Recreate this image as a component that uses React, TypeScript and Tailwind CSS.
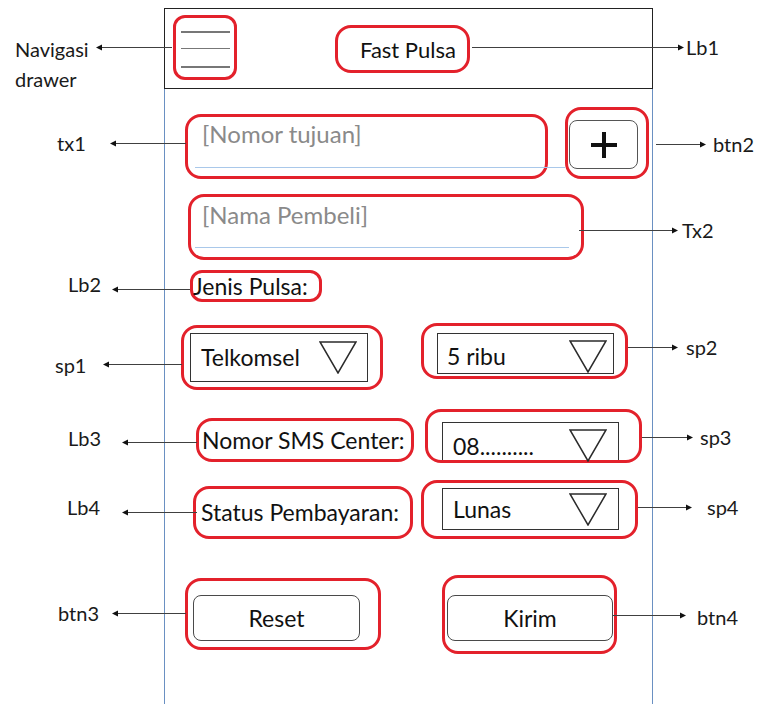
import React from "react";

function Arrow({
  className,
  width,
  dir,
}: {
  className: string;
  width: number;
  dir: "left" | "right";
}) {
  return (
    <svg
      className={`absolute ${className}`}
      width={width}
      height="9"
      viewBox={`0 0 ${width} 9`}
    >
      <line
        x1={dir === "left" ? 5 : 0}
        y1="4.5"
        x2={dir === "left" ? width : width - 5}
        y2="4.5"
        stroke="#404040"
        strokeWidth="1"
      />
      {dir === "left" ? (
        <polygon points="0,4.5 6,1.5 6,7.5" fill="#111" />
      ) : (
        <polygon
          points={`${width},4.5 ${width - 6},1.5 ${width - 6},7.5`}
          fill="#111"
        />
      )}
    </svg>
  );
}

function Note({ className, children }: { className: string; children: React.ReactNode }) {
  return (
    <span className={`absolute text-[20px] leading-[24px] text-[#1a1a1a] ${className}`}>
      {children}
    </span>
  );
}

function Caret() {
  return (
    <svg width="38" height="33" viewBox="0 0 38 33" className="shrink-0">
      <polygon points="1,1 37,1 19,32" fill="none" stroke="#2b2b2b" strokeWidth="1.5" />
    </svg>
  );
}

function ButtonBox({ label }: { label: string }) {
  return (
    <div className="flex h-full w-full items-center justify-center rounded-lg border-[1.5px] border-[#4a4a4a] text-[23px] text-[#111]">
      {label}
    </div>
  );
}

export default function App() {
  return (
    <div
      className="relative h-[704px] w-[757px] overflow-hidden bg-white"
      style={{ fontFamily: "Lato, 'Open Sans', sans-serif" }}
    >
      {/* phone frame */}
      <div className="ml-[164px] mt-[8px] flex h-[696px] w-[489px] flex-col">
        <header className="flex h-[81px] shrink-0 items-start border border-[#222]">
          <div className="ml-[8px] mt-[6px] flex h-[65px] w-[64px] flex-col rounded-xl border-[3px] border-[#e3212b] pt-[13px]">
            <div className="ml-[5px] h-[1.5px] w-[49px] bg-[#777]" />
            <div className="ml-[5px] mt-[15px] h-[1.5px] w-[49px] bg-[#777]" />
            <div className="ml-[5px] mt-[17px] h-[1.5px] w-[49px] bg-[#777]" />
          </div>
          <div className="ml-[98px] mt-[16px] flex h-[48px] w-[135px] items-center rounded-2xl border-[3px] border-[#e3212b] pl-[22px] text-[22px] text-[#111]">
            Fast Pulsa
          </div>
        </header>

        <main className="flex flex-1 flex-col border-x border-[#6a90c2] text-[23px] text-[#111]">
          {/* tx1 + btn2 */}
          <div className="mt-[18px] flex items-start">
            <div className="ml-[20px] mt-[7px] h-[65px] w-[363px] rounded-2xl border-[3px] border-[#e3212b]">
              <div className="pl-[14px] pt-[3px] text-[24px] leading-[28px] text-[#8a8a8a]">[Nomor tujuan]</div>
              <div className="ml-[7px] mt-[19px] h-px w-[370px] bg-[#a9c8ea]" />
            </div>
            <div className="ml-[17px] h-[72px] w-[84px] rounded-2xl border-[3px] border-[#e3212b] pl-[1px] pt-[10px]">
              <div className="flex h-[49px] w-[69px] items-center justify-center rounded-lg border-[1.5px] border-[#555]">
                <svg width="30" height="30" viewBox="0 0 30 30">
                  <path d="M15 2v26M2 15h26" stroke="#111" strokeWidth="4" />
                </svg>
              </div>
            </div>
          </div>

          {/* Tx2 */}
          <div className="ml-[23px] mt-[15px] h-[66px] w-[396px] rounded-2xl border-[3px] border-[#e3212b]">
            <div className="pl-[11px] pt-[4px] text-[24px] leading-[28px] text-[#8a8a8a]">[Nama Pembeli]</div>
            <div className="ml-[4px] mt-[18px] h-px w-[374px] bg-[#a9c8ea]" />
          </div>

          {/* Lb2 */}
          <div className="ml-[25px] mt-[10px] flex h-[32px] w-[132px] items-center rounded-xl border-[3px] border-[#e3212b] leading-none">
            Jenis Pulsa:
          </div>

          {/* sp1 + sp2 */}
          <div className="mt-[21px] flex items-start">
            <div className="ml-[16px] mt-[2px] h-[65px] w-[202px] rounded-2xl border-[3px] border-[#e3212b] pl-[6px] pt-[5px]">
              <div className="flex h-[49px] w-[178px] items-center justify-between border-[1.5px] border-[#333] pl-[10px] pr-[10px]">
                <span>Telkomsel</span>
                <Caret />
              </div>
            </div>
            <div className="ml-[38px] h-[56px] w-[207px] rounded-2xl border-[3px] border-[#e3212b] pl-[13px] pt-[7px]">
              <div className="flex h-[41px] w-[177px] items-start justify-between border-[1.5px] border-[#333] pl-[9px] pr-[6px]">
                <span className="mt-[5px]">5 ribu</span>
                <div className="mt-[6px]">
                  <Caret />
                </div>
              </div>
            </div>
          </div>

          {/* Lb3 + sp3 */}
          <div className="mt-[19px] flex items-start">
            <div className="ml-[31px] mt-[9px] flex h-[44px] w-[218px] items-center rounded-2xl border-[3px] border-[#e3212b] pl-[3px]">
              Nomor SMS Center:
            </div>
            <div className="ml-[11px] h-[54px] w-[217px] rounded-2xl border-[3px] border-[#e3212b] pl-[14px] pt-[10px]">
              <div className="flex h-[38px] w-[177px] items-start justify-between border-[1.5px] border-b-0 border-[#333] pl-[10px] pr-[11px]">
                <span className="mt-[6px]">08..........</span>
                <div className="mt-[6px]">
                  <Caret />
                </div>
              </div>
            </div>
          </div>

          {/* Lb4 + sp4 */}
          <div className="mt-[17px] flex items-start">
            <div className="ml-[28px] mt-[6px] flex h-[53px] w-[220px] items-center rounded-2xl border-[3px] border-[#e3212b] pl-[5px]">
              Status Pembayaran:
            </div>
            <div className="ml-[8px] h-[59px] w-[217px] rounded-2xl border-[3px] border-[#e3212b] pl-[18px] pt-[5px]">
              <div className="flex h-[42px] w-[177px] items-center justify-between border-[1.5px] border-[#333] pl-[10px] pr-[11px]">
                <span>Lunas</span>
                <Caret />
              </div>
            </div>
          </div>

          {/* btn3 + btn4 */}
          <div className="mt-[36px] flex items-start">
            <div className="ml-[20px] mt-[3px] h-[72px] w-[196px] rounded-2xl border-[3px] border-[#e3212b] pl-[5px] pt-[14px]">
              <div className="h-[46px] w-[167px]">
                <ButtonBox label="Reset" />
              </div>
            </div>
            <div className="ml-[61px] h-[79px] w-[175px] rounded-2xl border-[3px] border-[#e3212b] pl-[2px] pt-[17px]">
              <div className="h-[46px] w-[166px]">
                <ButtonBox label="Kirim" />
              </div>
            </div>
          </div>
        </main>
      </div>

      {/* annotations */}
      <Arrow className="left-[96px] top-[43px]" width={76} dir="left" />
      <Note className="left-[15px] top-[34px] leading-[30px]">
        Navigasi
        <br />
        drawer
      </Note>

      <Arrow className="left-[472px] top-[43px]" width={212} dir="right" />
      <Note className="left-[686px] top-[35px]">Lb1</Note>

      <Arrow className="left-[110px] top-[139px]" width={76} dir="left" />
      <Note className="left-[57px] top-[131px]">tx1</Note>

      <Arrow className="left-[656px] top-[140px]" width={50} dir="right" />
      <Note className="left-[713px] top-[132px]">btn2</Note>

      <Arrow className="left-[579px] top-[226px]" width={99} dir="right" />
      <Note className="left-[682px] top-[218px]">Tx2</Note>

      <Arrow className="left-[112px] top-[285px]" width={78} dir="left" />
      <Note className="left-[68px] top-[272px]">Lb2</Note>

      <Arrow className="left-[103px] top-[360px]" width={79} dir="left" />
      <Note className="left-[55px] top-[353px]">sp1</Note>

      <Arrow className="left-[628px] top-[343px]" width={50} dir="right" />
      <Note className="left-[686px] top-[335px]">sp2</Note>

      <Arrow className="left-[122px] top-[438px]" width={75} dir="left" />
      <Note className="left-[68px] top-[426px]">Lb3</Note>

      <Arrow className="left-[642px] top-[433px]" width={51} dir="right" />
      <Note className="left-[700px] top-[425px]">sp3</Note>

      <Arrow className="left-[122px] top-[508px]" width={75} dir="left" />
      <Note className="left-[67px] top-[495px]">Lb4</Note>

      <Arrow className="left-[638px] top-[503px]" width={54} dir="right" />
      <Note className="left-[707px] top-[495px]">sp4</Note>

      <Arrow className="left-[112px] top-[609px]" width={74} dir="left" />
      <Note className="left-[58px] top-[601px]">btn3</Note>

      <Arrow className="left-[613px] top-[611px]" width={73} dir="right" />
      <Note className="left-[697px] top-[605px]">btn4</Note>
    </div>
  );
}
